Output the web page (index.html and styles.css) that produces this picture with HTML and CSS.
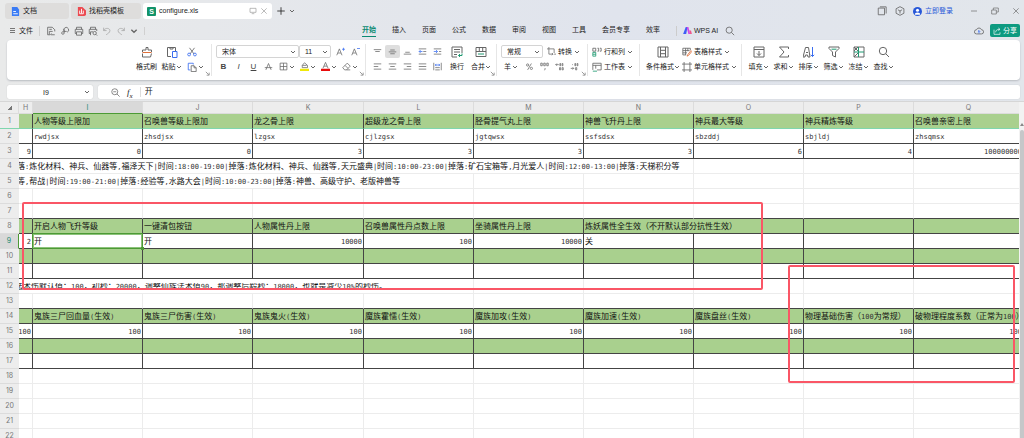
FILE: index.html
```html
<!DOCTYPE html>
<html lang="zh-CN">
<head>
    <meta charset="UTF-8">
    <meta name="viewport" content="width=device-width, initial-scale=1.0">
    <title>configure.xls</title>
    <link rel="stylesheet" href="styles.css">
</head>
<body>
    <!-- icons -->
    <svg class="defs" aria-hidden="true">
        <symbol id="caret" viewBox="0 0 6 6"><path d="M1 2l2 2 2-2"/></symbol>
        <symbol id="search" viewBox="0 0 12 12"><circle cx="5" cy="5" r="3.7"/><path d="M7.8 7.8L11 11"/></symbol>
        <symbol id="zoomout" viewBox="0 0 12 12"><circle cx="5" cy="5" r="4"/><path d="M8 8l3.500 3.500M3 5h4"/></symbol>
        <symbol id="save" viewBox="0 0 12 12"><path d="M2 10.500v-9h5.500L10.500 4.500v2M2 10.500h3M4 10V6.500h4M4 4h3M6 10.500h4.500M6.500 9l-1.500 1.500"/></symbol>
        <symbol id="pin" viewBox="0 0 12 12"><path d="M5 6.500a3 3 0 1 1 3.500 1M5 6.500h3M5 3.500v5a1.500 1.500 0 1 1-2-1.500h2"/></symbol>
        <symbol id="print" viewBox="0 0 12 12"><path d="M3 4V1.500h6V4M3 9H1.500V4h9v5H9M3 7h6v4H3z"/></symbol>
        <symbol id="preview" viewBox="0 0 12 12"><path d="M3 4V1.500h6V4M3 9H1.500V4h9v2M3 11V7h3"/><circle cx="8" cy="8.500" r="2"/><path d="M9.500 10l1.500 1.500"/></symbol>
        <symbol id="undo" viewBox="0 0 12 12"><path d="M2 2v3.500h3.500M2 5.500c2-4 7.500-3 7.500 0C9.500 8 7 9 5 10.500"/></symbol>
        <symbol id="redo" viewBox="0 0 12 12"><path d="M10 2v3.500H6.500M10 5.500c-2-4-7.500-3-7.500 0C2.500 8 5 9 7 10.500"/></symbol>
        <symbol id="brush" viewBox="0 0 12 12"><path d="M1.500 6V4H5V1.500h2V4h3.500v2M1.500 7.500V11h8l1-3.500"/><path class="orange" d="M1.500 6.500h9"/></symbol>
        <symbol id="paste" viewBox="0 0 12 12"><path d="M5 10.500H1.500v-9h8V5M4 1v2h3V1"/><path class="blue" d="M6.500 5.500H11v6H6.500z"/></symbol>
        <symbol id="cut" viewBox="0 0 12 12"><path d="M3 1l5.500 7.500M9 1L3.500 8.500"/><circle class="blue" cx="2.500" cy="9" r="1.700"/><circle class="blue" cx="9.500" cy="9" r="1.700"/></symbol>
        <symbol id="copy" viewBox="0 0 12 12"><path class="blue" d="M4 9.500H1.500v-8h6V3"/><path d="M5 4.500h3.500L11 7v4.500H5zM8.500 4.500V7H11"/></symbol>
        <symbol id="fontup" viewBox="0 0 12 12"><path d="M1 11l3.500-8.500L8 11M2.500 8h4"/><path class="blue" d="M8 3h4M10 1v4"/></symbol>
        <symbol id="fontdown" viewBox="0 0 12 12"><path d="M1 11l3.500-8.500L8 11M2.500 8h4"/><path class="blue" d="M8 2h4"/></symbol>
        <symbol id="strike" viewBox="0 0 12 12"><path d="M2.500 10.500L6 2l3.500 8.500M1 7.500h10"/></symbol>
        <symbol id="borders" viewBox="0 0 12 12"><path d="M1.500 1.500h9v9h-9zM6 1.500v9M1.500 6h9"/></symbol>
        <symbol id="fill" viewBox="0 0 12 12"><path d="M3 7.500V4.500L6 1l4 3.500v3H3M3 4.500h6"/><path class="bar yellow" d="M0 9h12v3H0z"/></symbol>
        <symbol id="color" viewBox="0 0 12 12"><path d="M2.500 8.500L6 .5l3.500 8M4 5.500h4"/><path class="bar red" d="M0 9h12v3H0z"/></symbol>
        <symbol id="eraser" viewBox="0 0 12 12"><path d="M1 7.500L7 1.500l4 4-5 5H3.500zM4 4.500l4 4M6 10.500h5"/></symbol>
        <symbol id="top" viewBox="0 0 12 12"><path d="M1 3.500h10M3 6h6"/></symbol>
        <symbol id="middle" viewBox="0 0 12 12"><path d="M3 4h6M1 6.500h10M3 9h6"/></symbol>
        <symbol id="bottom" viewBox="0 0 12 12"><path d="M3 7h6M1 9.500h10"/></symbol>
        <symbol id="outdent" viewBox="0 0 12 12"><path d="M1 2.500h10M7 6h4M1 9.500h10"/><path class="blue" d="M6 6H1.500M3.500 4l-2 2 2 2"/></symbol>
        <symbol id="indent" viewBox="0 0 12 12"><path d="M1 2.500h10M8 6h3M1 9.500h10"/><path class="blue" d="M1 6h5M4 4l2 2-2 2"/></symbol>
        <symbol id="left" viewBox="0 0 12 12"><path d="M1 2.500h10M1 6h6M1 9.500h10"/></symbol>
        <symbol id="center" viewBox="0 0 12 12"><path d="M1 2.500h10M3 6h6M1 9.500h10"/></symbol>
        <symbol id="right" viewBox="0 0 12 12"><path d="M1 2.500h10M5 6h6M1 9.500h10"/></symbol>
        <symbol id="justify" viewBox="0 0 12 12"><path d="M1 2.500h10M1 6h10M1 9.500h10"/></symbol>
        <symbol id="spread" viewBox="0 0 12 12"><path d="M1 1v10M11 1v10M3 7.500h6M3 10.500h6"/><path class="blue" d="M3 4h6M4.500 2.500L3 4l1.500 1.500M7.500 2.500L9 4 7.500 5.500"/></symbol>
        <symbol id="wrap" viewBox="0 0 12 12"><path d="M6 11H1V1h10v6M3 3.500h6M3 6h6M3 8.500h3"/><path class="green-line" d="M11 7.500v2H7.500M9 8L7.500 9.500 9 11"/></symbol>
        <symbol id="merge" viewBox="0 0 12 12"><path d="M1 1.500h10v9H1zM4.300 1.500V5M7.700 1.500V5M1 5.500h10"/><path class="green-line" d="M3 8h6"/></symbol>
        <symbol id="convert" viewBox="0 0 12 12"><path d="M2.500 0v2.500M0 2.500h9.500V8M2.500 2.500v7H8M6.500 8l1.500 1.500L6.500 11M9.500 9.500H12"/></symbol>
        <symbol id="percent" viewBox="0 0 12 12"><circle cx="3.500" cy="4" r="1.500"/><circle cx="8.500" cy="8.500" r="1.500"/><path d="M8.500 2l-5 8.500"/></symbol>
        <symbol id="thousand" viewBox="0 0 12 12"><path d="M1 1.500h2v3.500H1zM5 1.500h2V5H5zM9 1.500h2V5H9zM6 8l1 1-1 2"/></symbol>
        <symbol id="decless" viewBox="0 0 12 12"><path d="M5 3.500H1M2.500 2L1 3.500 2.500 5M6.500 2h1v3h-1zM9.500 2h1v3h-1zM6 7.500h1.500v3H6zM9.500 7.500H11v3H9.500z"/></symbol>
        <symbol id="decmore" viewBox="0 0 12 12"><path d="M6.500 2h1v3h-1zM9.500 2h1v3h-1zM3 3.500h1M1 8.500h4M3.500 7L5 8.500 3.500 10M7.500 7.500H9v3H7.500z"/></symbol>
        <symbol id="rowcol" viewBox="0 0 12 12"><path d="M1 1.500h3.500V5H1zM6.500 1.500H8V5H6.500M9.500 1.500H11V5H9.500"/><path class="green-line" d="M1 6.500h3.500V11H1zM1 8.700h3.500"/></symbol>
        <symbol id="sheet" viewBox="0 0 12 12"><path d="M1 9.500v-8h10v8H6M1 4h10M4.500 4v4"/><path class="green-line" d="M1 11h5"/></symbol>
        <symbol id="cond" viewBox="0 0 12 12"><path d="M1 1v10h10V1zM3.500 1v10M8.500 1v10M3.500 4.300h5M3.500 7.700h5"/></symbol>
        <symbol id="tstyle" viewBox="0 0 12 12"><path d="M5 9.500H1v-8h9V4M1 4.300h8M1 7h5M4.300 1.500v8M7 1.500V5"/><path class="orange" d="M11 4L7 9l-1 2 2-1 4-5"/></symbol>
        <symbol id="cstyle" viewBox="0 0 12 12"><path d="M2.500 0v12M9.500 0v12M0 2.500h12M0 9.500h12"/></symbol>
        <symbol id="filldown" viewBox="0 0 12 12"><path d="M1 1h10v10H1zM1 3.500h10M6 5v4.500M4 7.500l2 2 2-2"/></symbol>
        <symbol id="sum" viewBox="0 0 12 12"><path d="M10.500 3V1h-9L6 6l-4.500 5h9V9"/></symbol>
        <symbol id="sort" viewBox="0 0 12 12"><path d="M0 11h2l.5-2h2l.5 2h2L5.500 1.500h-3zM3 6.500h2"/><path class="blue" d="M9.500 1v9.500M7.800 8.800l1.700 1.700 1.700-1.700"/></symbol>
        <symbol id="filter" viewBox="0 0 12 12"><path d="M1 1h10v1.500L7.500 6v5l-3-1.500V6L1 2.500z"/><path class="green-line" d="M3.500 3.200h5"/></symbol>
        <symbol id="freeze" viewBox="0 0 12 12"><path d="M1 1h10v10H1zM1 1l4 4M5 1L1 5M1 11l4-4"/><path class="green-line" d="M5.500 1v10M1 6h10"/></symbol>
        <symbol id="cloud" viewBox="0 0 12 12"><path d="M3 9.500a2.500 2.500 0 0 1 0-5 3.200 3.200 0 0 1 6 0 2.500 2.500 0 0 1 0 5z"/><path class="blue" d="M6 9V5.500M4.700 6.800L6 5.500l1.300 1.300"/></symbol>
        <symbol id="share" viewBox="0 0 12 12"><path d="M1.500 4v7h9V8M4 8c0-3 2-4.500 6-4.500M8 1.500l2.500 2L8 5.500"/></symbol>
        <symbol id="screen" viewBox="0 0 12 12"><path d="M1.500 2h9v6h-9zM4 10h4"/></symbol>
        <symbol id="close" viewBox="0 0 12 12"><path d="M2 2l8 8M10 2l-8 8"/></symbol>
        <symbol id="plus" viewBox="0 0 12 12"><path d="M6 1.500v9M1.500 6h9"/></symbol>
        <symbol id="window" viewBox="0 0 12 12"><path d="M1.500 2.500h7.500v8H1.500zM3.500 1h7.500v8"/></symbol>
        <symbol id="cube" viewBox="0 0 12 12"><path d="M6 .8l4.700 2.500v5.400L6 11.200 1.300 8.700V3.300zM3.500 4.500L6 6l2.500-1.500M6 6v3"/></symbol>
        <symbol id="min" viewBox="0 0 12 12"><path d="M1.500 6h9"/></symbol>
        <symbol id="restore" viewBox="0 0 12 12"><path d="M1 4.500h7v6H1zM3.500 4.500v-3H11v6H8"/></symbol>
        <symbol id="corner" viewBox="0 0 6 6"><path d="M1 1l3.500 3.500M5 2v3H2"/></symbol>
    </svg>

    <header class="titlebar">
        <button class="tab"><svg class="logo" viewBox="0 0 10 10"><path fill="#3b7cf5" d="M1 0h6l2 3v7H1z"/><path stroke="#fff" d="M2.500 5h3M2.500 7.500h5"/></svg>文档</button>
        <button class="tab docer"><svg class="logo" viewBox="0 0 10 10"><path fill="#ec4a50" d="M1 0h5l4 4v4a2 2 0 0 1-2 2H1z"/><path stroke="#fff" fill="none" d="M5 2v5M3 4v3.500h4V4"/></svg>找稻壳模板</button>
        <div class="tab active">
            <span class="logo xls">S</span>configure.xls
            <svg class="icon i8 push"><use href="#screen"/></svg>
            <button class="x" aria-label="关闭"><svg class="icon i8"><use href="#close"/></svg></button>
        </div>
        <button class="new" aria-label="新建"><svg class="icon i10 dark"><use href="#plus"/></svg></button>
        <svg class="icon i6"><use href="#caret"/></svg>
        <div class="window">
            <button aria-label="窗口"><svg class="icon i10"><use href="#window"/></svg></button>
            <button aria-label="应用"><svg class="icon i10"><use href="#cube"/></svg></button>
            <a class="login" href="#"><svg class="avatar" viewBox="0 0 10 10"><circle cx="5" cy="5" r="5" fill="#2757d8"/><circle cx="5" cy="3.700" r="1.700" fill="#fff"/><path fill="#fff" d="M2 8.500a3 2.500 0 0 1 6 0z"/></svg>立即登录</a>
            <button aria-label="最小化"><svg class="icon i8"><use href="#min"/></svg></button>
            <button aria-label="还原"><svg class="icon i8"><use href="#restore"/></svg></button>
            <button aria-label="关闭窗口"><svg class="icon i8"><use href="#close"/></svg></button>
        </div>
    </header>

    <div class="menubar">
        <div class="quick">
            <button class="file"><i class="burger"></i>文件</button>
            <button aria-label="保存"><svg class="icon i10"><use href="#save"/></svg></button>
            <button aria-label="输出"><svg class="icon i10"><use href="#pin"/></svg></button>
            <button aria-label="打印"><svg class="icon i10"><use href="#print"/></svg></button>
            <button aria-label="预览"><svg class="icon i10"><use href="#preview"/></svg></button>
            <button aria-label="撤销"><svg class="icon i10 pale"><use href="#undo"/></svg></button>
            <button aria-label="恢复"><svg class="icon i10 pale"><use href="#redo"/></svg></button>
            <button class="more" aria-label="更多"><svg class="icon i8"><use href="#caret"/></svg></button>
        </div>
        <nav>
            <a class="on" href="#">开始</a>
            <a href="#">插入</a>
            <a href="#">页面</a>
            <a href="#">公式</a>
            <a href="#">数据</a>
            <a href="#">审阅</a>
            <a href="#">视图</a>
            <a href="#">工具</a>
            <a href="#">会员专享</a>
            <a href="#">效率</a>
        </nav>
        <a class="ai" href="#"><svg viewBox="0 0 10 8"><path fill="#3f5ef5" d="M0 8L3 0h2L3.500 8z"/><path fill="#d145e8" d="M4 0h2l2 8H6z"/><path fill="#f0568c" d="M7 4h2l1 4H8z"/></svg>WPS AI</a>
        <button aria-label="搜索"><svg class="icon i10"><use href="#search"/></svg></button>
        <svg class="icon i10 cloud"><use href="#cloud"/></svg>
        <button class="share"><svg class="icon i8"><use href="#share"/></svg>分享</button>
    </div>

    <div class="ribbon">
        <div class="group clip">
            <button class="big"><svg class="icon"><use href="#brush"/></svg><span>格式刷</span></button>
            <button class="big"><svg class="icon"><use href="#paste"/></svg><span>粘贴<svg class="icon i6"><use href="#caret"/></svg></span></button>
            <div class="stack">
                <div class="line"><button class="sm" aria-label="剪切"><svg class="icon i10"><use href="#cut"/></svg></button></div>
                <div class="line"><button class="drop" aria-label="复制"><svg class="icon i10"><use href="#copy"/></svg><svg class="icon i6"><use href="#caret"/></svg></button></div>
            </div>
            <svg class="launch"><use href="#corner"/></svg>
        </div>
        <div class="group font">
            <div class="stack">
                <div class="line">
                    <label class="pick name"><select aria-label="字体"><option>宋体</option></select><svg class="icon i6"><use href="#caret"/></svg></label>
                    <label class="pick size"><select aria-label="字号"><option>11</option></select><svg class="icon i6"><use href="#caret"/></svg></label>
                    <button class="sm"><svg class="icon i9"><use href="#fontup"/></svg></button>
                    <button class="sm"><svg class="icon i9"><use href="#fontdown"/></svg></button>
                </div>
                <div class="line letters">
                    <button class="sm"><b>B</b></button>
                    <button class="sm"><i>I</i></button>
                    <button class="sm"><u>U</u></button>
                    <button class="sm"><svg class="icon i9"><use href="#strike"/></svg></button>
                    <button class="drop"><svg class="icon i9"><use href="#borders"/></svg><svg class="icon i6"><use href="#caret"/></svg></button>
                    <button class="drop"><svg class="icon i9"><use href="#fill"/></svg><svg class="icon i6"><use href="#caret"/></svg></button>
                    <button class="drop"><svg class="icon i9"><use href="#color"/></svg><svg class="icon i6"><use href="#caret"/></svg></button>
                    <button class="drop"><svg class="icon i9"><use href="#eraser"/></svg><svg class="icon i6"><use href="#caret"/></svg></button>
                </div>
            </div>
            <svg class="launch"><use href="#corner"/></svg>
        </div>
        <div class="group align">
            <div class="stack">
                <div class="line">
                    <button class="sm"><svg class="icon i9"><use href="#top"/></svg></button>
                    <button class="sm pressed"><svg class="icon i9"><use href="#middle"/></svg></button>
                    <button class="sm"><svg class="icon i9"><use href="#bottom"/></svg></button>
                    <button class="sm"><svg class="icon i9"><use href="#outdent"/></svg></button>
                    <button class="sm"><svg class="icon i9"><use href="#indent"/></svg></button>
                </div>
                <div class="line">
                    <button class="sm"><svg class="icon i9"><use href="#left"/></svg></button>
                    <button class="sm"><svg class="icon i9"><use href="#center"/></svg></button>
                    <button class="sm"><svg class="icon i9"><use href="#right"/></svg></button>
                    <button class="sm"><svg class="icon i9"><use href="#justify"/></svg></button>
                    <button class="sm"><svg class="icon i9"><use href="#spread"/></svg></button>
                </div>
            </div>
            <button class="big"><svg class="icon"><use href="#wrap"/></svg><span>换行</span></button>
            <button class="big"><svg class="icon"><use href="#merge"/></svg><span>合并<svg class="icon i6"><use href="#caret"/></svg></span></button>
            <svg class="launch"><use href="#corner"/></svg>
        </div>
        <div class="group num">
            <div class="stack">
                <div class="line">
                    <label class="pick format"><select aria-label="数字格式"><option>常规</option></select><svg class="icon i6"><use href="#caret"/></svg></label>
                    <button class="text"><svg class="icon i9"><use href="#convert"/></svg>转换<svg class="icon i6"><use href="#caret"/></svg></button>
                </div>
                <div class="line">
                    <button class="drop">羊<svg class="icon i6"><use href="#caret"/></svg></button>
                    <button class="sm"><svg class="icon i9"><use href="#percent"/></svg></button>
                    <button class="sm"><svg class="icon i9"><use href="#thousand"/></svg></button>
                    <button class="sm"><svg class="icon i9"><use href="#decless"/></svg></button>
                    <button class="sm"><svg class="icon i9"><use href="#decmore"/></svg></button>
                </div>
            </div>
            <svg class="launch"><use href="#corner"/></svg>
        </div>
        <div class="group cells">
            <div class="stack">
                <div class="line"><button class="text"><svg class="icon i10"><use href="#rowcol"/></svg>行和列<svg class="icon i6"><use href="#caret"/></svg></button></div>
                <div class="line"><button class="text"><svg class="icon i10"><use href="#sheet"/></svg>工作表<svg class="icon i6"><use href="#caret"/></svg></button></div>
            </div>
        </div>
        <div class="group style">
            <button class="big wide"><svg class="icon"><use href="#cond"/></svg><span>条件格式<svg class="icon i6"><use href="#caret"/></svg></span></button>
            <div class="stack">
                <div class="line"><button class="text"><svg class="icon i10"><use href="#tstyle"/></svg>表格样式<svg class="icon i6"><use href="#caret"/></svg></button></div>
                <div class="line"><button class="text"><svg class="icon i10"><use href="#cstyle"/></svg>单元格样式<svg class="icon i6"><use href="#caret"/></svg></button></div>
            </div>
        </div>
        <div class="group edit">
            <button class="big"><svg class="icon"><use href="#filldown"/></svg><span>填充<svg class="icon i6"><use href="#caret"/></svg></span></button>
            <button class="big"><svg class="icon"><use href="#sum"/></svg><span>求和<svg class="icon i6"><use href="#caret"/></svg></span></button>
            <button class="big"><svg class="icon"><use href="#sort"/></svg><span>排序<svg class="icon i6"><use href="#caret"/></svg></span></button>
            <button class="big"><svg class="icon"><use href="#filter"/></svg><span>筛选<svg class="icon i6"><use href="#caret"/></svg></span></button>
            <button class="big"><svg class="icon"><use href="#freeze"/></svg><span>冻结<svg class="icon i6"><use href="#caret"/></svg></span></button>
            <button class="big"><svg class="icon"><use href="#search"/></svg><span>查找<svg class="icon i6"><use href="#caret"/></svg></span></button>
        </div>
    </div>

    <div class="formula">
        <label class="cellname"><input type="text" value="I9" aria-label="名称框"><svg class="icon i6"><use href="#caret"/></svg></label>
        <div class="fbar">
            <svg class="icon i9"><use href="#zoomout"/></svg>
            <em>f<sub>x</sub></em>
            <input type="text" value="开" aria-label="编辑栏">
        </div>
    </div>

    <main>
        <div class="pane">
            <table>
                <colgroup>
                    <col class="c-num"><col class="c-h"><col><col><col class="c-k"><col><col><col><col><col><col><col class="c-rest">
                </colgroup>
                <thead></thead>
                <tbody></tbody>
            </table>
            <div class="mark mark-left"></div>
            <div class="mark mark-right"></div>
        </div>
        <div class="scroll"><i class="up"></i><i class="thumb"></i></div>
    </main>

    <script>
        const cols = ['H', 'I', 'J', 'K', 'L', 'M', 'N', 'O', 'P', 'Q', ''];
        const active = { row: 9, col: 'I' };

        // cls: green = filled header row, box = bordered row, edge = dark line under a plain row
        // a cell is a text, or [text, colspan]
        const rows = {
            1: { cls: 'green box frozen', cells: ['', '人物等级上限加', '召唤兽等级上限加', '龙之骨上限', '超级龙之骨上限', '胫骨提气丸上限', '神兽飞升丹上限', '神兵最大等级', '神兵精炼等级', '召唤兽亲密上限'] },
            2: { cls: 'box', cells: ['', 'rwdjsx', 'zhsdjsx', 'lzgsx', 'cjlzgsx', 'jgtqwsx', 'ssfsdsx', 'sbzddj', 'sbjldj', 'zhsqmsx'] },
            3: { cls: 'box', cells: ['9', '0', '0', '3', '3', '3', '3', '6', '4', '100000000'] },
            4: { cls: 'long', cells: [['落:炼化材料、神兵、仙器等,福泽天下|时间:18:00-19:00|掉落:炼化材料、神兵、仙器等,天元盛典|时间:10:00-23:00|掉落:矿石宝箱等,月光爱人|时间:12:00-13:00|掉落:天梯积分等', 7]] },
            5: { cls: 'long', cells: [['等,帮战|时间:19:00-21:00|掉落:经验等,水路大会|时间:10:00-23:00|掉落:神兽、高级守护、老版神兽等', 5]] },
            7: { cls: 'edge', cells: [] },
            8: { cls: 'green box', cells: ['', '开启人物飞升等级', '一键清包按钮', '人物属性丹上限', '召唤兽属性丹点数上限', '坐骑属性丹上限', ['炼妖属性全生效（不开默认部分抗性生效）', 2], '', ''] },
            9: { cls: 'box', cells: ['2', '开', '开', '10000', '100', '10000', '关', '', '', ''] },
            10: { cls: 'green box', cells: [] },
            11: { cls: 'box', cells: [] },
            12: { cls: 'long cut', cells: [['法术伤默认值：100，初秒：20000，调整仙族法术值90，那调整后毅秒：18000，也就是减少10%的秒伤。', 5]] },
            13: { cls: 'edge', cells: [] },
            14: { cls: 'green box', cells: ['', '鬼族三尸回血量(生效)', '鬼族三尸伤害(生效)', '鬼族鬼火(生效)', '魔族霍懦(生效)', '魔族加攻(生效)', '魔族加速(生效)', '魔族盘丝(生效)', '物理基础伤害（100为常规）', '破物理程度系数（正常为100）'] },
            15: { cls: 'box', cells: ['100', '100', '100', '100', '100', '100', '100', '100', '100', '100'] },
            16: { cls: 'green box', cells: [] },
            17: { cls: 'box', cells: [] }
        };

        // latin runs are set in the half-width face
        function half(text) {
            return text.replace(/[\x20-\x7e]+/g, '<span class="half">$&</span>');
        }

        let head = '<tr><th class="all"></th>';
        cols.forEach((c) => {
            head += `<th class="${c == active.col ? 'sel' : ''}">${c}</th>`;
        });
        document.querySelector('thead').innerHTML = head + '</tr>';

        let body = '';
        for (let r = 1; r <= 22; r++) {
            const row = rows[r] || { cls: '', cells: [] };
            body += `<tr class="${row.cls}"><th class="${r == active.row ? 'sel' : ''}">${r}</th>`;
            let i = 0;
            let n = 0;
            while (i < cols.length) {
                const cell = row.cells[n++] || '';
                const text = Array.isArray(cell) ? cell[0] : cell;
                const span = Array.isArray(cell) ? cell[1] : 1;
                let cls = /^\d+$/.test(text) ? 'n' : '';
                if (r == active.row && cols[i] == active.col) cls += ' cur';
                body += `<td class="${cls}" colspan="${span}"><div>${half(text)}</div></td>`;
                i += span;
            }
            body += '</tr>';
        }
        document.querySelector('tbody').innerHTML = body;
    </script>
</body>
</html>
```
FILE: styles.css
```css
* {
    margin: 0;
    padding: 0;
    box-sizing: border-box;
}
body {
    height: 100vh;
    display: flex;
    flex-direction: column;
    overflow: hidden;
    background: linear-gradient(90deg, #e9eaea, #e0e4ed 60%, #e2e6eb);
    font: 7px/10px "Liberation Sans", "Noto Sans CJK SC", sans-serif;
    color: #222;
}
button, input, select {
    font: inherit;
    color: inherit;
    border: none;
    background: none;
    outline: none;
}
a {
    color: inherit;
    text-decoration: none;
}
.defs {
    display: none;
}

/* icons */
.icon {
    width: 12px;
    height: 12px;
    flex: none;
    display: block;
    fill: none;
    stroke: #666;
    stroke-width: 1;
    overflow: visible;
}
.i10 {
    width: 10px;
    height: 10px;
}
.i9 {
    width: 9px;
    height: 9px;
}
.i8 {
    width: 8px;
    height: 8px;
}
.i6 {
    width: 6px;
    height: 6px;
}
.dark {
    stroke: #222;
}
.pale {
    stroke: #aaa;
}
.blue {
    stroke: #3a6df0;
}
.green-line {
    stroke: #1f9a72;
}
.orange {
    stroke: #e0703a;
}
.bar {
    stroke: none;
}
.yellow {
    fill: #f0e80a;
}
.red {
    fill: #e80c0c;
}

/* title bar */
.titlebar {
    height: 22px;
    padding: 3px 4px 3px 5px;
    display: flex;
    align-items: center;
    flex: none;
}
.tab {
    width: 64px;
    height: 16px;
    margin-right: 2px;
    padding: 0 6px;
    display: flex;
    align-items: center;
    gap: 3px;
    background: #dedddc;
    border-radius: 3px;
}
.docer {
    width: 70px;
}
.tab.active {
    width: 129px;
    margin-right: 4px;
    padding: 0 4px;
    background: #fff;
}
.logo {
    width: 9px;
    height: 9px;
    flex: none;
}
.xls {
    background: #12936a;
    color: #fff;
    font-weight: bold;
    text-align: center;
    border-radius: 1px;
}
.push {
    margin-left: auto;
}
.active .icon {
    stroke: #999;
}
.new {
    margin-right: 3px;
}
.window {
    margin-left: auto;
    display: flex;
    align-items: center;
    gap: 8px;
}
.window button:nth-of-type(n+4) {
    margin-left: 5px;
}
.login {
    display: flex;
    align-items: center;
    gap: 3px;
    margin-right: 9px;
    color: #2757d8;
}
.avatar {
    width: 9px;
    height: 9px;
}

/* menu bar */
.menubar {
    height: 17px;
    padding-right: 4px;
    display: flex;
    align-items: center;
    flex: none;
}
.quick {
    width: 362px;
    padding-left: 10px;
    display: flex;
    align-items: center;
    gap: 4px;
}
.file {
    display: flex;
    align-items: center;
    gap: 4px;
    padding-right: 6px;
    margin-right: 2px;
    border-right: 1px solid #d0d0d0;
}
.more {
    padding-right: 6px;
    border-right: 1px solid #d0d0d0;
}
.burger {
    width: 5px;
    height: 5px;
    border-top: 1px solid #777;
    border-bottom: 1px solid #777;
    background: linear-gradient(#777, #777) 0 1px / 5px 1px no-repeat;
}
nav {
    display: flex;
    gap: 16px;
    margin-right: 16px;
}
nav a {
    padding: 1px 0;
    border-bottom: 1px solid transparent;
}
nav .on {
    color: #0b8a72;
    font-weight: bold;
    border-color: #0b8a72;
}
.ai {
    display: flex;
    align-items: center;
    gap: 2px;
    margin-right: 7px;
    padding-left: 6px;
    border-left: 1px solid #ccc;
}
.ai svg {
    width: 9px;
    height: 7px;
}
.cloud {
    margin-left: auto;
    margin-right: 6px;
}
.share {
    width: 30px;
    height: 13px;
    display: flex;
    align-items: center;
    justify-content: center;
    gap: 2px;
    border-radius: 2px;
    background: #0d9a80;
    color: #fff;
}
.share .icon {
    stroke: #fff;
}

/* ribbon */
.ribbon {
    margin: 1px 4px 0 7px;
    padding: 4px 0;
    display: flex;
    flex: none;
    background: #fff;
    border-radius: 4px;
    box-shadow: 0 1px 2px #b8bbc0;
}
.group {
    position: relative;
    display: flex;
    padding: 0 3px 2px 4px;
    border-right: 1px solid #e6e6e6;
}
.clip {
    width: 205px;
    padding-left: 127px;
}
.font {
    width: 154px;
}
.align {
    width: 131px;
}
.num {
    width: 91px;
}
.cells {
    width: 52px;
}
.style {
    width: 102px;
}
.edit {
    border: none;
}
.launch {
    position: absolute;
    right: 1px;
    bottom: 0;
    width: 5px;
    height: 5px;
    fill: none;
    stroke: #888;
}
.line {
    display: flex;
    align-items: center;
    height: 15px;
}
.letters {
    font-size: 8px;
    color: #444;
}
.big {
    width: 25px;
    display: grid;
    grid-template-rows: 15px 15px;
    place-items: center;
    white-space: nowrap;
}
.big.wide {
    width: 38px;
}
.big span, .text, .drop, .sm {
    display: flex;
    align-items: center;
    white-space: nowrap;
}
.sm {
    width: 15px;
    height: 13px;
    justify-content: center;
}
.drop {
    width: 21px;
    gap: 1px;
    padding-left: 3px;
}
.text {
    gap: 2px;
}
.pressed {
    background: #dedede;
    border-radius: 2px;
}
.pick {
    position: relative;
    height: 13px;
    border: 1px solid #d4d4d4;
    border-radius: 2px;
}
.pick select {
    width: 100%;
    height: 11px;
    padding-left: 5px;
    appearance: none;
}
.pick .icon, .cellname .icon {
    position: absolute;
    right: 2px;
    top: 3px;
}
.name {
    width: 83px;
}
.size {
    width: 32px;
    margin-right: 2px;
}
.format {
    width: 42px;
    margin-right: 4px;
}

/* formula bar */
.formula {
    display: flex;
    gap: 5px;
    margin: 5px 4px 0 7px;
    flex: none;
}
.cellname, .fbar {
    height: 14px;
    background: #fff;
    border-radius: 2px;
    box-shadow: 0 0 1px #bbb;
}
.cellname {
    position: relative;
    width: 86px;
}
.cellname input {
    width: 78px;
    height: 14px;
    text-align: center;
}
.cellname .icon {
    right: 3px;
    top: 4px;
}
.fbar {
    flex: 1;
    display: flex;
    align-items: center;
    padding-left: 13px;
    gap: 7px;
}
.fbar em {
    font: italic 9px/10px "Liberation Serif", serif;
}
.fbar sub {
    font-size: 7px;
    line-height: 1px;
}
.fbar input {
    flex: 1;
    padding-left: 4px;
    border-left: 1px solid #ddd;
    font-size: 8px;
}

/* sheet */
main {
    flex: 1;
    min-height: 0;
    margin-top: 2px;
    display: flex;
    background: #ededed;
    border-top: 1px solid #d6d6d6;
}
.pane {
    flex: 1;
    position: relative;
    overflow: hidden;
}
table {
    width: 100%;
    min-width: 1025px;
    table-layout: fixed;
    border-spacing: 0;
    background: #fff;
}
col {
    width: 110px;
}
.c-num {
    width: 19px;
}
.c-h {
    width: 14px;
}
.c-k {
    width: 111px;
}
.c-rest {
    width: auto;
}
th {
    height: 15px;
    background: #ededed;
    border-bottom: 1px solid #dcdcdc;
    font: 7px/14px Inter, sans-serif;
    color: #777;
}
thead th {
    line-height: 11px;
    height: 12px;
    border-right: 1px solid #dcdcdc;
}
.all::after {
    content: "";
    display: block;
    width: 4px;
    height: 4px;
    margin-left: 8px;
    background: linear-gradient(135deg, transparent 50%, #777 50%);
}
th.sel {
    background: #d9d9d9;
    color: #1a8a72;
}
thead th.sel {
    border-bottom: 1px solid #4c9a35;
}
tbody th.sel {
    border-right: 1px solid #4c9a35;
}
td {
    height: 15px;
    border-right: 1px solid #ececec;
    border-bottom: 1px solid #ececec;
    font: 8px/14px "Noto Sans CJK SC", sans-serif;
    color: #111;
}
td div {
    height: 14px;
    padding: 0 1px;
    overflow: hidden;
    white-space: nowrap;
}
.half {
    font: 7px/14px "DejaVu Sans Mono", monospace;
    color: #333;
}
.n div {
    direction: rtl;
}
.green td {
    background: #a9d08e;
}
.box td {
    border-color: #444;
}
.edge td {
    border-bottom-color: #444;
}
.frozen td, .frozen th {
    border-bottom-color: #7fd6ae;
}
.long div {
    padding: 0;
    text-indent: -2px;
}
.cut div {
    text-indent: -4px;
    clip-path: inset(4px 0 3px);
}
.cur {
    position: relative;
}
/* selection frame and its fill handle */
.cur::before {
    content: "";
    position: absolute;
    inset: -1px;
    border: 1px solid #4c9a35;
    outline: 1px solid #8cc27a;
    outline-offset: -2px;
}
.cur::after {
    content: "";
    position: absolute;
    right: -2px;
    bottom: -2px;
    width: 3px;
    height: 3px;
    background: #4c9a35;
}

/* red frames drawn over the sheet */
.mark {
    position: absolute;
    border: 2px solid #fa5666;
    border-radius: 2px;
}
.mark-left {
    left: 22px;
    top: 100px;
    width: 741px;
    height: 88px;
}
.mark-right {
    left: 788px;
    top: 163px;
    width: 227px;
    height: 118px;
}
.scroll {
    width: 5px;
    padding: 20px 0 0 1px;
    display: flex;
    flex-direction: column;
    gap: 4px;
    background: #f2f2f2;
}
.up {
    height: 4px;
    border: 2px solid transparent;
    border-top: none;
    border-bottom: 3px solid #888;
}
.thumb {
    flex: 1;
    background: #c6c7c9;
    border-radius: 2px 2px 0 0;
}
```
